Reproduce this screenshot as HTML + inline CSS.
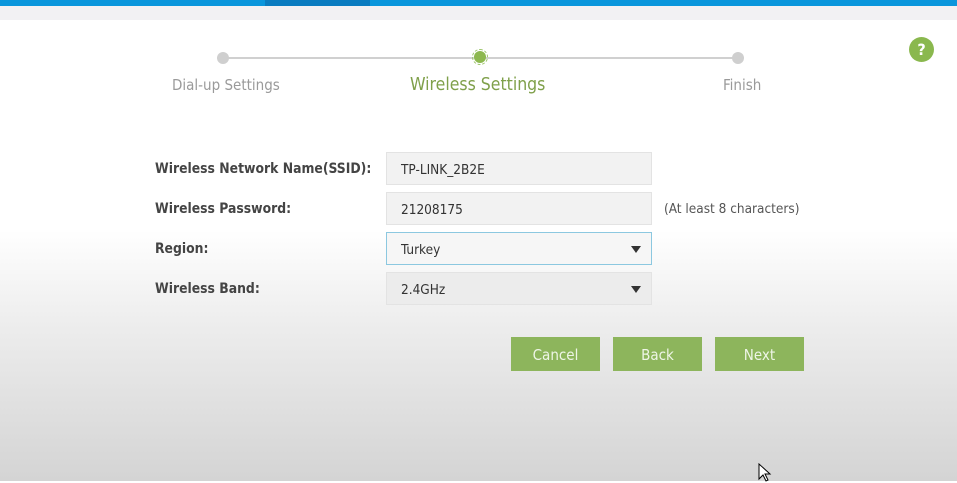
<!DOCTYPE html>
<html><head><style>
body{margin:0;width:957px;height:481px;overflow:hidden;position:relative;font-family:"DejaVu Sans Condensed","Liberation Sans",sans-serif;background:linear-gradient(#fff 0,#fff 230px,#ececec 330px,#d4d4d4 481px);}
.top{position:absolute;left:0;top:0;width:957px;height:6px;background:#0a96dc}
.top i{position:absolute;left:265px;width:105px;height:6px;background:#0a7cc0}
.band{position:absolute;left:0;top:6px;width:957px;height:14px;background:#f2f1f3}
.line{position:absolute;top:57px;height:2px;background:#d0d0d0}
.dot{position:absolute;width:12px;height:12px;border-radius:50%;background:#cfcfcf}
.step{position:absolute;top:76px;font-size:15px;color:#9a9a9a}
.lbl{position:absolute;left:155px;font-size:13.8px;font-weight:bold;color:#444}
.fld{position:absolute;left:386px;width:266px;height:33px;background:#f2f2f2;border:1px solid #e3e3e3;box-sizing:border-box;font-size:13.5px;color:#333;padding:9px 0 0 14px}
.arr{position:absolute;right:10px;top:13px;width:0;height:0;border-left:5px solid transparent;border-right:5px solid transparent;border-top:7px solid #333}
.btn{position:absolute;top:337px;width:89px;height:34px;background:#8db55c;color:#eef5e6;font-size:15px;text-align:center;line-height:36px}
</style></head><body>
<div class="top"><i></i></div><div class="band"></div>
<div class="line" style="left:223px;width:515px"></div>
<div class="dot" style="left:217px;top:52px"></div>
<div class="dot" style="left:732px;top:52px"></div>
<div style="position:absolute;left:472px;top:49px;width:16px;height:16px;border-radius:50%;border:1px dashed #9cc56a;box-sizing:border-box"></div>
<div class="dot" style="left:474px;top:51px;background:#8db84f"></div>
<div class="step" style="left:172px">Dial-up Settings</div>
<div class="step" style="left:410px;font-size:17.5px;top:75px;color:#7fa04a">Wireless Settings</div>
<div class="step" style="left:723px">Finish</div>
<div style="position:absolute;left:909px;top:37px;width:25px;height:25px;border-radius:50%;background:#8ab84e;color:#fff;font-weight:bold;font-size:16px;text-align:center;line-height:25px">?</div>
<div class="lbl" style="top:161px">Wireless Network Name(SSID):</div>
<div class="lbl" style="top:201px">Wireless Password:</div>
<div class="lbl" style="top:241px">Region:</div>
<div class="lbl" style="top:281px">Wireless Band:</div>
<div class="fld" style="top:152px">TP-LINK_2B2E</div>
<div class="fld" style="top:192px">21208175</div>
<div class="fld" style="top:232px;background:#f6f6f6;border-color:#8cc8e0">Turkey<span class="arr"></span></div>
<div class="fld" style="top:272px;background:#ececec">2.4GHz<span class="arr"></span></div>
<div style="position:absolute;left:664px;top:201px;font-size:13.5px;color:#555">(At least 8 characters)</div>
<div class="btn" style="left:511px">Cancel</div>
<div class="btn" style="left:613px">Back</div>
<div class="btn" style="left:715px">Next</div>
<svg style="position:absolute;left:758px;top:463px" width="14" height="20"><path d="M1 1 L1 16 L5 12 L8 18 L10 17 L7 11 L12 11 Z" fill="#fff" stroke="#000"/></svg>
</body></html>
